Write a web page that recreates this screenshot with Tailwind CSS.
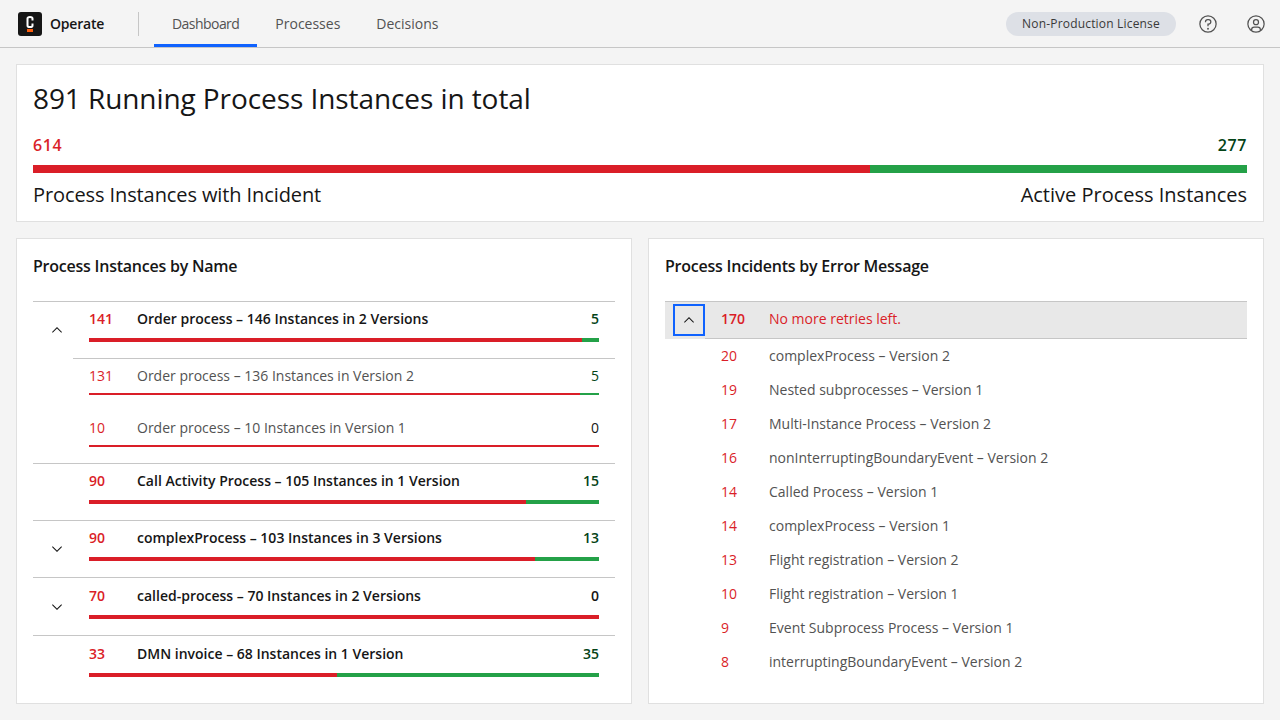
<!DOCTYPE html>
<html>
<head>
    <meta charset="utf-8">
    <title>Operate</title>
    <script src="https://cdn.jsdelivr.net/npm/@tailwindcss/browser@4"></script>
</head>
<body class="bg-[#f4f4f4] h-[720px] overflow-hidden font-['Open_Sans',sans-serif] text-[#161616]">
    <header class="h-12 flex items-center border-b border-[#c6c6c6] pl-[18px] pr-[14px]">
        <div class="w-6 h-6 rounded-[3px] bg-[#161616] flex items-center justify-center">
            <svg width="24" height="24" viewBox="0 0 24 24" fill="none">
                <path d="M14.5 8.5V6.6C14.5 5.500 13.8 5 12 5S9.500 5.500 9.500 6.600V13.400C9.500 14.500 10.200 15 12 15S14.500 14.500 14.500 13.400V11.500" stroke="#fff" stroke-width="2"/>
                <rect x="9" y="17" width="6" height="3" fill="#fc5d0d"/>
            </svg>
        </div>
        <span class="ml-2 text-sm font-semibold w-[88px] tracking-[-0.2px]">Operate</span>
        <div class="w-px h-6 bg-[#c6c6c6]"></div>
        <nav class="ml-[15px] flex self-start h-[47px] text-sm text-[#525252]">
            <a class="px-[18px] h-[47px] flex items-center border-b-[3px] border-[#0f62fe] pt-[3px] tracking-[-0.55px]">Dashboard</a>
            <a class="px-[18px] h-[47px] flex items-center">Processes</a>
            <a class="px-[18px] h-[47px] flex items-center">Decisions</a>
        </nav>
        <div class="ml-auto flex items-center">
            <span class="h-6 w-[170px] rounded-full bg-[#dde0e6] text-xs tracking-[0.18px] text-[#393939] flex items-center justify-center">Non-Production License</span>
            <svg class="ml-[22px]" width="20" height="20" viewBox="0 0 32 32" fill="#525252">
                <path d="M16 2a14 14 0 1 0 14 14A14 14 0 0 0 16 2Zm0 26a12 12 0 1 1 12-12 12 12 0 0 1-12 12Z"/>
                <circle cx="16" cy="23.5" r="1.5"/>
                <path d="M17 8h-1.500a4.490 4.490 0 0 0-4.500 4.500V13h2v-.5a2.500 2.500 0 0 1 2.500-2.500H17a2.500 2.500 0 0 1 0 5h-2v4.500h2V17a4.500 4.500 0 0 0 0-9Z"/>
            </svg>
            <svg class="ml-7" width="20" height="20" viewBox="0 0 32 32" fill="#525252">
                <path d="M16 8a5 5 0 1 0 5 5 5 5 0 0 0-5-5Zm0 8a3 3 0 1 1 3-3 3 3 0 0 1-3 3Z"/>
                <path d="M16 2a14 14 0 1 0 14 14A14.016 14.016 0 0 0 16 2ZM10 26.377V25a3 3 0 0 1 3-3h6a3 3 0 0 1 3 3v1.377a11.899 11.899 0 0 1-12 0Zm13.993-1.451A5.002 5.002 0 0 0 19 20h-6a5.002 5.002 0 0 0-4.993 4.926 12 12 0 1 1 15.986 0Z"/>
            </svg>
        </div>
    </header>

    <main class="p-4 flex flex-col gap-4">
        <section class="h-[158px] bg-white border border-[#e0e0e0] px-4 pt-[15px]">
            <h1 class="text-[28px] leading-9 tracking-[-0.08px]">891 Running Process Instances in total</h1>
            <div class="mt-[19px] flex justify-between text-base leading-5 font-semibold tracking-[0.6px]">
                <span class="text-[#da1e28]">614</span>
                <span class="text-[#044317]">277</span>
            </div>
            <div class="mt-[10px] h-2 flex">
                <div class="w-[837px] bg-[#da1e28]"></div>
                <div class="grow bg-[#24a148]"></div>
            </div>
            <div class="mt-2 flex justify-between text-xl leading-7">
                <span class="tracking-[-0.1px]">Process Instances with Incident</span>
                <span>Active Process Instances</span>
            </div>
        </section>

        <div class="grid grid-cols-2 gap-4 h-[466px]">
            <section class="bg-white border border-[#e0e0e0] px-4 pt-[15px]">
                <h2 class="text-base leading-6 font-semibold tracking-[-0.23px]">Process Instances by Name</h2>
                <div class="mt-[23px] text-sm">
                    <div class="flex h-[162px] border-t border-[#c6c6c6]">
                        <div class="w-10 shrink-0 pt-5 pl-4">
                            <svg width="16" height="16" viewBox="0 0 16 16" fill="#161616"><path d="M8 5l5 5-.7.7L8 6.400l-4.300 4.300L3 10z"/></svg>
                        </div>
                        <div class="grow">
                            <div class="h-[57px] px-4 pt-[7px] border-b border-[#c6c6c6]">
                                <div class="flex leading-5 font-semibold">
                                    <span class="w-12 text-[#da1e28]">141</span>
                                    <span class="grow">Order process – 146 Instances in 2 Versions</span>
                                    <span class="text-[#044317]">5</span>
                                </div>
                                <div class="mt-[9px] h-1 flex"><div class="w-[493px] bg-[#da1e28]"></div><div class="grow bg-[#24a148]"></div></div>
                            </div>
                            <div class="h-[52px] px-4 pt-[7px]">
                                <div class="flex leading-5 text-[#525252]">
                                    <span class="w-12 text-[#da1e28]">131</span>
                                    <span class="grow">Order process – 136 Instances in Version 2</span>
                                    <span class="text-[#044317]">5</span>
                                </div>
                                <div class="mt-[7px] h-0.5 flex"><div class="w-[491px] bg-[#da1e28]"></div><div class="grow bg-[#24a148]"></div></div>
                            </div>
                            <div class="px-4 pt-[7px]">
                                <div class="flex leading-5 text-[#525252]">
                                    <span class="w-12 text-[#da1e28]">10</span>
                                    <span class="grow">Order process – 10 Instances in Version 1</span>
                                    <span class="text-[#161616]">0</span>
                                </div>
                                <div class="mt-[7px] h-0.5 bg-[#da1e28]"></div>
                            </div>
                        </div>
                    </div>

                    <div class="flex h-[57px] border-t border-[#c6c6c6]">
                        <div class="w-10 shrink-0"></div>
                        <div class="grow px-4 pt-[7px]">
                            <div class="flex leading-5 font-semibold">
                                <span class="w-12 text-[#da1e28]">90</span>
                                <span class="grow">Call Activity Process – 105 Instances in 1 Version</span>
                                <span class="text-[#044317]">15</span>
                            </div>
                            <div class="mt-[9px] h-1 flex"><div class="w-[437px] bg-[#da1e28]"></div><div class="grow bg-[#24a148]"></div></div>
                        </div>
                    </div>

                    <div class="flex h-[57px] border-t border-[#c6c6c6]">
                        <div class="w-10 shrink-0 pt-5 pl-4">
                            <svg width="16" height="16" viewBox="0 0 16 16" fill="#161616"><path d="M8 11L3 6l.7-.7L8 9.600l4.300-4.300.7.7z"/></svg>
                        </div>
                        <div class="grow px-4 pt-[7px]">
                            <div class="flex leading-5 font-semibold">
                                <span class="w-12 text-[#da1e28]">90</span>
                                <span class="grow">complexProcess – 103 Instances in 3 Versions</span>
                                <span class="text-[#044317]">13</span>
                            </div>
                            <div class="mt-[9px] h-1 flex"><div class="w-[446px] bg-[#da1e28]"></div><div class="grow bg-[#24a148]"></div></div>
                        </div>
                    </div>

                    <div class="flex h-[58px] border-t border-[#c6c6c6]">
                        <div class="w-10 shrink-0 pt-[21px] pl-4">
                            <svg width="16" height="16" viewBox="0 0 16 16" fill="#161616"><path d="M8 11L3 6l.7-.7L8 9.600l4.300-4.300.7.7z"/></svg>
                        </div>
                        <div class="grow px-4 pt-2">
                            <div class="flex leading-5 font-semibold">
                                <span class="w-12 text-[#da1e28]">70</span>
                                <span class="grow">called-process – 70 Instances in 2 Versions</span>
                                <span class="text-[#161616]">0</span>
                            </div>
                            <div class="mt-[9px] h-1 bg-[#da1e28]"></div>
                        </div>
                    </div>

                    <div class="flex h-[57px] border-t border-[#c6c6c6]">
                        <div class="w-10 shrink-0"></div>
                        <div class="grow px-4 pt-2">
                            <div class="flex leading-5 font-semibold">
                                <span class="w-12 text-[#da1e28]">33</span>
                                <span class="grow">DMN invoice – 68 Instances in 1 Version</span>
                                <span class="text-[#044317]">35</span>
                            </div>
                            <div class="mt-[9px] h-1 flex"><div class="w-[248px] bg-[#da1e28]"></div><div class="grow bg-[#24a148]"></div></div>
                        </div>
                    </div>
                </div>
            </section>

            <section class="bg-white border border-[#e0e0e0] px-4 pt-[15px]">
                <h2 class="text-base leading-6 font-semibold tracking-[-0.23px]">Process Incidents by Error Message</h2>
                <div class="mt-[23px] text-sm">
                    <div class="h-[38px] bg-[#e8e8e8] border-t border-[#c6c6c6] flex">
                        <div class="w-10 shrink-0 pt-0.5 pl-2">
                            <div class="w-8 h-8 border-2 border-[#0f62fe] flex items-center justify-center">
                                <svg width="16" height="16" viewBox="0 0 16 16" fill="#161616"><path d="M8 5l5 5-.7.7L8 6.400l-4.300 4.300L3 10z"/></svg>
                            </div>
                        </div>
                        <div class="grow flex items-center border-b border-[#c6c6c6] pl-4 pb-0.5">
                            <span class="w-12 font-semibold text-[#da1e28]">170</span>
                            <span class="text-[#da1e28]">No more retries left.</span>
                        </div>
                    </div>
                    <ul class="text-[#525252]">
                        <li class="h-[34px] flex items-center pl-14"><span class="w-12 text-[#da1e28]">20</span>complexProcess – Version 2</li>
                        <li class="h-[34px] flex items-center pl-14"><span class="w-12 text-[#da1e28]">19</span>Nested subprocesses – Version 1</li>
                        <li class="h-[34px] flex items-center pl-14"><span class="w-12 text-[#da1e28]">17</span>Multi-Instance Process – Version 2</li>
                        <li class="h-[34px] flex items-center pl-14"><span class="w-12 text-[#da1e28]">16</span>nonInterruptingBoundaryEvent – Version 2</li>
                        <li class="h-[34px] flex items-center pl-14"><span class="w-12 text-[#da1e28]">14</span>Called Process – Version 1</li>
                        <li class="h-[34px] flex items-center pl-14"><span class="w-12 text-[#da1e28]">14</span>complexProcess – Version 1</li>
                        <li class="h-[34px] flex items-center pl-14"><span class="w-12 text-[#da1e28]">13</span>Flight registration – Version 2</li>
                        <li class="h-[34px] flex items-center pl-14"><span class="w-12 text-[#da1e28]">10</span>Flight registration – Version 1</li>
                        <li class="h-[34px] flex items-center pl-14"><span class="w-12 text-[#da1e28]">9</span>Event Subprocess Process – Version 1</li>
                        <li class="h-[34px] flex items-center pl-14"><span class="w-12 text-[#da1e28]">8</span>interruptingBoundaryEvent – Version 2</li>
                    </ul>
                </div>
            </section>
        </div>
    </main>
</body>
</html>
